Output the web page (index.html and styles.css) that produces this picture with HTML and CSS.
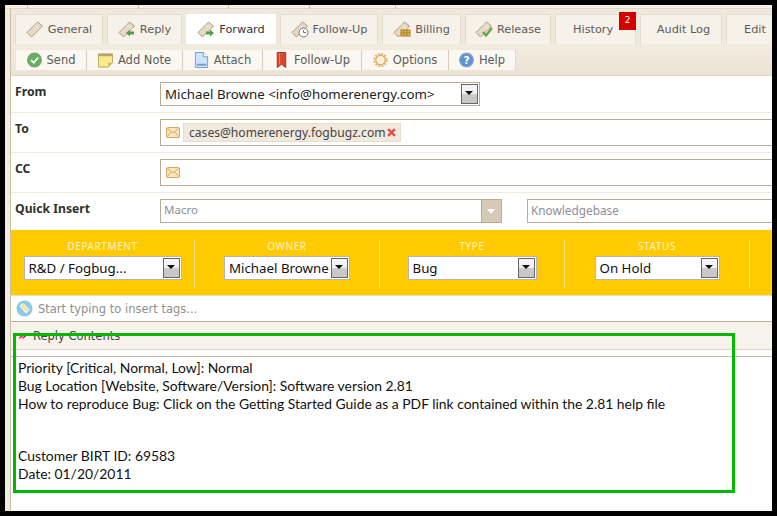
FILE: index.html
```html
<!DOCTYPE html>
<html>
<head>
  <title>Forward case</title>
  <link rel="stylesheet" href="styles.css">
</head>
<body>
<svg class="defs" width="0" height="0">
  <symbol id="ticket" viewBox="0 0 18 18">
    <path d="M1 12.500 L11.500 2 L16.500 6 L5.500 17 Z" fill="#e8d8c6" stroke="#b09a84" stroke-width="1"/>
    <path d="M8.500 4.500 L13 9" stroke="#fff" stroke-width="1" stroke-dasharray="1.500 1"/>
  </symbol>
  <symbol id="mail" viewBox="0 0 14 11">
    <rect x=".5" y=".5" width="13" height="10" rx="1" fill="#fbe6bf" stroke="#d9a860"/>
    <path d="M1 1 L7 6 L13 1 M1 10 L5 5 M13 10 L9 5" fill="none" stroke="#d9a860"/>
  </symbol>
</svg>
<div class="sheet">
  <div class="top-strip">
    <span class="tick t1"></span><span class="tick t2"></span><span class="tick t3"></span><span class="tick t4"></span><span class="tick t5"></span>
  </div>
  <div class="main">
    <div class="tabs">
      <div class="tab w-general"><svg class="tab-icon"><use href="#ticket"/></svg>General</div>
      <div class="tab w-reply">
        <svg class="tab-icon" viewBox="0 0 18 18"><use href="#ticket"/><path d="M8 13 L12 9.500 V11.500 H16 V14.500 H12 V16.500 Z" fill="#4f9e4a"/></svg>Reply
      </div>
      <div class="tab w-forward active">
        <svg class="tab-icon" viewBox="0 0 18 18"><use href="#ticket"/><path d="M17 13 L13 9.500 V11.500 H9 V14.500 H13 V16.500 Z" fill="#4f9e4a"/></svg>Forward
      </div>
      <div class="tab w-follow">
        <svg class="tab-icon" viewBox="0 0 18 18"><use href="#ticket"/><circle cx="12.500" cy="12.500" r="4.500" fill="#fff" stroke="#777"/><path d="M12.500 10 V12.500 H15" fill="none" stroke="#777"/></svg>Follow-Up
      </div>
      <div class="tab w-billing">
        <svg class="tab-icon" viewBox="0 0 18 18"><use href="#ticket"/><rect x="8" y="10" width="9" height="6" fill="#eeb94f" stroke="#a87c26"/><path d="M8 13 H17 M11 10 V16 M14 10 V16" stroke="#a87c26"/></svg>Billing
      </div>
      <div class="tab w-release">
        <svg class="tab-icon" viewBox="0 0 18 18"><use href="#ticket"/><path d="M8 12 L11 15.500 L17 8" fill="none" stroke="#5aa83c" stroke-width="2.200"/></svg>Release
      </div>
      <div class="tab w-history">History<span class="badge">2</span></div>
      <div class="tab w-audit">Audit Log</div>
      <div class="tab w-edit">Edit</div>
    </div>

    <div class="toolbar">
      <div class="tool w-send">
        <svg class="tool-icon" viewBox="0 0 14 14"><circle cx="7" cy="7" r="6.500" fill="#62b35a" stroke="#8a9a88"/><path d="M3.800 7 L6.200 9.500 L10.400 4.800" fill="none" stroke="#fff" stroke-width="1.600"/></svg>Send
      </div>
      <div class="tool w-note">
        <svg class="tool-icon" viewBox="0 0 16 16"><path d="M.5 1.500 H15.500 V11 L11 15.500 H.5 Z" fill="#fbe98c" stroke="#b5a35c"/><path d="M.5 1.500 H15.500 V4 H.5 Z" fill="#b9a468"/><path d="M15.500 11 H11 V15.500 Z" fill="#c9b765"/></svg>Add Note
      </div>
      <div class="tool w-attach">
        <svg class="tool-icon" viewBox="0 0 14 17"><path d="M.5 .5 H9 L13.500 5 V16.500 H.5 Z" fill="#cfe4f8" stroke="#6b9fd3"/><path d="M9 .5 V5 H13.500" fill="#fff" stroke="#6b9fd3"/><path d="M2 13.500 H12" stroke="#6b9fd3" stroke-width="2"/></svg>Attach
      </div>
      <div class="tool w-followup">
        <svg class="tool-icon" viewBox="0 0 10 17"><path d="M.5 .5 H9.500 V16.500 L5 13 L.5 16.500 Z" fill="#d9472b" stroke="#a33018"/><path d="M3 1 V13" stroke="#ef8a6c"/></svg>Follow-Up
      </div>
      <div class="tool w-options">
        <svg class="tool-icon" viewBox="0 0 16 16"><circle cx="8" cy="8" r="5" fill="#fdf3da" stroke="#d9a860" stroke-width="1.200"/><circle cx="8" cy="8" r="6.500" fill="none" stroke="#e2b165" stroke-width="2.200" stroke-dasharray="2 1.400"/></svg>Options
      </div>
      <div class="tool w-help">
        <svg class="tool-icon" viewBox="0 0 14 14"><circle cx="7" cy="7" r="6.500" fill="#5f93d6" stroke="#8fa6c6"/><text x="7" y="10.500" text-anchor="middle" class="help-mark">?</text></svg>Help
      </div>
    </div>

    <div class="row row-from">
      <div class="label">From</div>
      <div class="select box-from">
        <span>Michael Browne &lt;info@homerenergy.com&gt;</span>
        <span class="arrow"></span>
      </div>
    </div>
    <div class="row row-mail">
      <div class="label">To</div>
      <div class="mailbox">
        <svg class="mail"><use href="#mail"/></svg>
        <span class="chip">cases@homerenergy.fogbugz.com<svg class="chip-x" viewBox="0 0 8 8"><path d="M1 1 L7 7 M7 1 L1 7" stroke="#e8493c" stroke-width="2"/></svg></span>
      </div>
    </div>
    <div class="row row-mail">
      <div class="label">CC</div>
      <div class="mailbox">
        <svg class="mail"><use href="#mail"/></svg>
      </div>
    </div>
    <div class="row row-quick">
      <div class="label">Quick Insert</div>
      <div class="combo">
        <span>Macro</span>
        <span class="combo-btn"></span>
      </div>
      <div class="kb">Knowledgebase</div>
    </div>

    <div class="meta">
      <div class="field first">
        <div class="field-label">DEPARTMENT</div>
        <div class="select box-dept"><span>R&amp;D / Fogbug...</span><span class="arrow"></span></div>
      </div>
      <div class="field">
        <div class="field-label">OWNER</div>
        <div class="select box-owner"><span>Michael Browne</span><span class="arrow"></span></div>
      </div>
      <div class="field">
        <div class="field-label">TYPE</div>
        <div class="select box-type"><span>Bug</span><span class="arrow"></span></div>
      </div>
      <div class="field">
        <div class="field-label">STATUS</div>
        <div class="select box-status"><span>On Hold</span><span class="arrow"></span></div>
      </div>
    </div>

    <div class="tags">
      <svg class="tag-icon" viewBox="0 0 17 17"><circle cx="8.500" cy="8.500" r="8" fill="#8ccbe8"/><path d="M4 6 L7 3.500 L13 9.500 L10 13 Z" fill="#f6e09a" stroke="#fff"/></svg>
      Start typing to insert tags...
    </div>

    <div class="reply-head"><span class="chevrons">&raquo;</span>Reply Contents</div>
    <div class="reply-gap"></div>

    <div class="body-text">
      <p>Priority [Critical, Normal, Low]: Normal<br>
      Bug Location [Website, Software/Version]: Software version 2.81<br>
      How to reproduce Bug: Click on the Getting Started Guide as a PDF link contained within the 2.81 help file</p>
      <p>Customer BIRT ID: 69583<br>
      Date: 01/20/2011</p>
    </div>
  </div>
  <div class="callout"></div>
</div>
</body>
</html>
```

FILE: styles.css
```css
html, body {
  margin: 0;
  padding: 0;
  height: 100%;
  background: #000;
}

body {
  padding: 5px;
  box-sizing: border-box;
  font-family: "DejaVu Sans", sans-serif;
  overflow: hidden;
}

.defs {
  position: absolute;
}

.sheet {
  position: relative;
  height: 506px;
  background: #f3ece1;
  padding-left: 6px;
  overflow: hidden;
}

/* bit of the window above the tabs */
.top-strip {
  position: relative;
  height: 4px;
  background: #f5efe5;
  margin-left: -6px;
  border-bottom: 1px solid #e0d8c8;
  box-sizing: border-box;
}

.tick {
  position: absolute;
  top: 0;
  width: 1px;
  height: 4px;
  background: #cfc6b5;
}
.t1 { left: 22px; }
.t2 { left: 133px; }
.t3 { left: 223px; }
.t4 { left: 304px; }
.t5 { left: 390px; }

.main {
  background: #fff;
  height: 502px;
  border-left: 1px solid #c9bda8;
  margin-left: -1px;
}

/* tabs */
.tabs {
  display: flex;
  gap: 4px;
  height: 35px;
  padding: 5px 0 0 4px;
  box-sizing: border-box;
  background: #efe8dc;
  white-space: nowrap;
}

.tab {
  position: relative;
  display: flex;
  align-items: center;
  justify-content: center;
  flex: none;
  gap: 4px;
  height: 30px;
  padding-bottom: 1px;
  box-sizing: border-box;
  background: #f6f1e9;
  border: 1px solid #e4dccd;
  border-bottom: none;
  color: #5c5c5c;
  font-size: 11.300px;
}

.tab.active {
  background: #fff;
  border-color: #fff;
  color: #333;
}

.w-general { width: 88px; }
.w-reply { width: 75px; }
.w-forward { width: 90px; }
.w-follow { width: 98px; }
.w-billing { width: 79px; }
.w-release { width: 86px; }
.w-history { width: 81px; justify-content: flex-start; padding-left: 17px; }
.w-audit { width: 82px; padding-left: 5px; }
.w-edit { width: 60px; justify-content: flex-start; padding-left: 17px; }

.tab-icon {
  width: 18px;
  height: 18px;
  flex: none;
}

.badge {
  position: absolute;
  top: -3px;
  right: -1px;
  width: 17px;
  height: 18px;
  background: #d40000;
  color: #fff;
  font-size: 9px;
  line-height: 16px;
  text-align: center;
}

/* toolbar */
.toolbar {
  display: flex;
  height: 32px;
  padding: 6px 0 0 5px;
  box-sizing: border-box;
  background: linear-gradient(#f2ebdf, #ebe3d5);
  border-bottom: 1px solid #ddd4c3;
}

.tool {
  display: flex;
  align-items: center;
  justify-content: center;
  flex: none;
  gap: 5px;
  height: 20px;
  box-sizing: border-box;
  background: #fbf8f2;
  border-right: 1px solid #d6ccbb;
  color: #5a5a5a;
  font-size: 11.500px;
  white-space: nowrap;
}

.w-send { width: 71px; }
.w-note { width: 96px; }
.w-attach { width: 80px; }
.w-followup { width: 99px; }
.w-options { width: 87px; }
.w-help { width: 67px; border-right-color: #e0d8c8; }

.tool-icon {
  width: 15px;
  height: 16px;
  flex: none;
}

.help-mark {
  fill: #fff;
  font-size: 10px;
  font-weight: bold;
  font-family: "DejaVu Sans", sans-serif;
}

/* form rows */
.row {
  display: flex;
  padding-top: 6px;
  box-sizing: border-box;
  border-bottom: 1px solid #f0e9de;
}

.row-from { height: 37px; }
.row-mail { height: 40px; }
.row-quick { height: 37px; border-bottom: none; }

.label {
  width: 149px;
  flex: none;
  padding: 2px 0 0 4px;
  box-sizing: border-box;
  color: #33302c;
  font-family: "Noto Sans", sans-serif;
  font-size: 12.200px;
  font-weight: bold;
  line-height: 16px;
}

.select {
  display: flex;
  align-items: center;
  justify-content: space-between;
  flex: none;
  height: 24px;
  padding: 0 1px 0 4px;
  box-sizing: border-box;
  background: #fff;
  border: 1px solid #b9aa92;
  color: #222;
  font-family: "Noto Sans", sans-serif;
  font-size: 13.300px;
  white-space: nowrap;
}

.box-from { width: 320px; }

.arrow {
  position: relative;
  flex: none;
  width: 17px;
  height: 20px;
  box-sizing: border-box;
  background: linear-gradient(#f4f4f4 45%, #c8c8c8 55%);
  border: 1px solid #666;
}

.arrow::after {
  content: "";
  position: absolute;
  top: 6px;
  left: 3px;
  border: 4px solid transparent;
  border-top: 4px solid #111;
}

.mailbox {
  display: flex;
  align-items: center;
  flex: 1;
  height: 27px;
  padding-left: 5px;
  box-sizing: border-box;
  border: 1px solid #b9aa92;
  border-right: none;
}

.mail {
  width: 14px;
  height: 11px;
  flex: none;
  margin-right: 3px;
}

.chip {
  display: flex;
  align-items: center;
  gap: 1px;
  height: 19px;
  padding: 0 4px 0 5px;
  background: #f1e9dd;
  border: 1px solid #e4dccd;
  box-sizing: border-box;
  color: #444;
  font-family: "Noto Sans", sans-serif;
  font-size: 12.100px;
}

.chip-x {
  width: 9px;
  height: 9px;
}

.combo {
  display: flex;
  justify-content: space-between;
  align-items: center;
  width: 342px;
  height: 24px;
  padding-left: 3px;
  box-sizing: border-box;
  border: 1px solid #b9aa92;
  color: #8e8e98;
  font-family: "Noto Sans", sans-serif;
  font-size: 11.500px;
  line-height: 20px;
}

.combo > span:first-child {
  margin-bottom: 3px;
}

.combo-btn {
  position: relative;
  width: 19px;
  height: 22px;
  background: #d5cab8;
  border-left: 1px solid #b9aa92;
}

.combo-btn::after {
  content: "";
  position: absolute;
  top: 9px;
  left: 5px;
  border: 4px solid transparent;
  border-top: 5px solid #fff;
}

.kb {
  flex: 1;
  height: 24px;
  margin-left: 25px;
  padding-left: 3px;
  box-sizing: border-box;
  border: 1px solid #b9aa92;
  border-right: none;
  color: #8e8e98;
  font-family: "Noto Sans", sans-serif;
  font-size: 11.800px;
  line-height: 20px;
}

/* yellow strip */
.meta {
  display: flex;
  height: 65px;
  padding-top: 10px;
  box-sizing: border-box;
  background: #ffcb00;
}

.field {
  display: flex;
  flex-direction: column;
  align-items: center;
  flex: none;
  width: 185px;
  height: 48px;
  box-sizing: border-box;
  border-right: 1px solid #ffe680;
}

.field.first { width: 184px; }

.field-label {
  height: 16px;
  color: #fff4c8;
  font-family: "Noto Sans", sans-serif;
  font-size: 10px;
  letter-spacing: .6px;
  line-height: 12px;
}

.meta .select {
  border-color: #b5b5b5;
  color: #111;
}

.box-dept { width: 158px; }
.box-owner { width: 126px; }
.box-type { width: 129px; }
.box-status { width: 125px; }

/* tags */
.tags {
  display: flex;
  align-items: center;
  gap: 5px;
  height: 27px;
  padding-left: 5px;
  box-sizing: border-box;
  border-bottom: 1px solid #bdb09a;
  border-top: 1px solid #e4dccd;
  color: #8f8f8f;
  font-size: 11.500px;
}

.tag-icon {
  width: 17px;
  height: 17px;
  flex: none;
}

/* reply section */
.reply-head {
  height: 28px;
  padding-left: 7px;
  box-sizing: border-box;
  background: #f7f2ec;
  border-bottom: 1px solid #dcd4c6;
  color: #444;
  font-size: 11.500px;
  line-height: 26px;
}

.chevrons {
  display: inline-block;
  width: 15px;
  color: #e0106a;
  font-size: 14px;
  font-weight: bold;
}

.reply-gap {
  height: 6px;
  border-bottom: 1px solid #c8bda8;
}

.body-text {
  padding: 2px 0 0 7px;
  color: #111;
  font-family: Lato, sans-serif;
  font-size: 13.900px;
  line-height: 18px;
}

.body-text p {
  margin: 0 0 34px;
}

/* green box drawn over the screenshot */
.callout {
  position: absolute;
  left: 8px;
  top: 328px;
  width: 722px;
  height: 160px;
  box-sizing: border-box;
  border: 3px solid #00ba00;
}
```
